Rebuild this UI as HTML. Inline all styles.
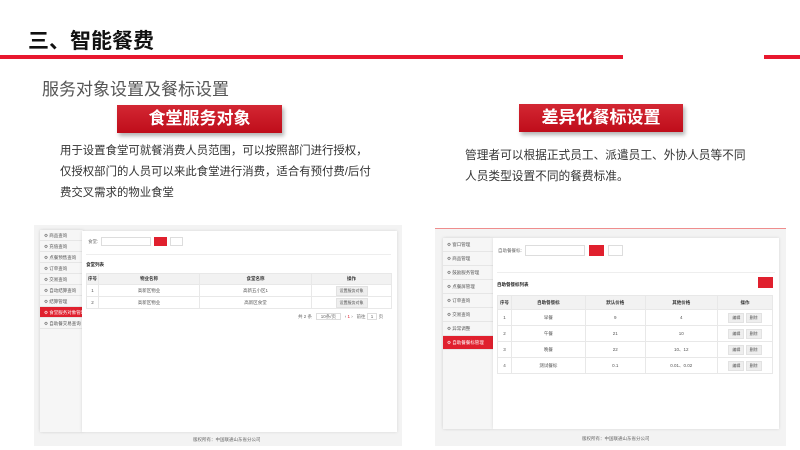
<!DOCTYPE html>
<html><head><meta charset="utf-8"><style>
*{margin:0;padding:0;box-sizing:border-box}
body{width:800px;height:450px;position:relative;background:#fff;font-family:"Liberation Sans","Noto Sans CJK SC",sans-serif;overflow:hidden}
.a{position:absolute}
.t{font-weight:bold;font-size:21px;color:#111;left:28px;top:25px}
.rl{background:#e8182e;height:4px;top:55px}
.sub{left:42px;top:75px;font-size:17px;color:#555}
.box{background:linear-gradient(#d32733,#bf0d1a);color:#fff;font-weight:bold;font-size:17px;text-align:center;line-height:28px;box-shadow:2px 3px 4px rgba(0,0,0,.3)}
.p{font-size:11.4px;color:#333;line-height:21px;white-space:nowrap}
.shot{background:#f3f3f3}
.sb{background:#f6f6f6;box-shadow:0 0 3px rgba(0,0,0,.15)}
.it{font-size:4.5px;color:#555;border-bottom:1px solid #e6e6e6;padding-left:4px;white-space:nowrap}
.it:before{content:"⚙ ";font-size:4.5px;color:#555}
.act{background:#e0202e;color:#fff}
.act:before{color:#fff}
.main{background:#fff;box-shadow:0 0 3px rgba(0,0,0,.12)}
table{border-collapse:collapse;position:absolute;font-size:4.5px;color:#555;text-align:center}
td,th{border:1px solid #e8e8e8;font-weight:normal}
th{background:#f2f2f2;color:#333;font-weight:bold}
.btn{display:inline-block;background:#eee;font-size:4px;padding:1px 3px;border:1px solid #e2e2e2}
.f{font-size:4.5px;color:#666}
</style></head><body>
<div class="a t">三、智能餐费</div>
<div class="a rl" style="left:0;width:623px"></div>
<div class="a rl" style="left:764px;width:36px"></div>
<div class="a sub">服务对象设置及餐标设置</div>
<div class="a box" style="left:117px;top:105px;width:165px;height:28px">食堂服务对象</div>
<div class="a box" style="left:519px;top:104px;width:164px;height:28px">差异化餐标设置</div>
<div class="a p" style="left:60px;top:141px">用于设置食堂可就餐消费人员范围，可以按照部门进行授权，<br>仅授权部门的人员可以来此食堂进行消费，适合有预付费/后付<br>费交叉需求的物业食堂</div>
<div class="a p" style="left:465px;top:145px;font-size:11.7px">管理者可以根据正式员工、派遣员工、外协人员等不同<br>人员类型设置不同的餐费标准。</div>

<!-- left screenshot -->
<div class="a shot" style="left:34px;top:225px;width:368px;height:221px"></div>
<div class="a sb" style="left:40px;top:230px;width:43px;height:202px">
<div class="it" style="height:11px;line-height:11px">商品查询</div>
<div class="it" style="height:11px;line-height:11px">充值查询</div>
<div class="it" style="height:11px;line-height:11px">点餐预售查询</div>
<div class="it" style="height:11px;line-height:11px">订单查询</div>
<div class="it" style="height:11px;line-height:11px">交易查询</div>
<div class="it" style="height:11px;line-height:11px">自动结算查询</div>
<div class="it" style="height:11px;line-height:11px">结算管理</div>
<div class="it act" style="height:11px;line-height:11px">食堂服务对象管理</div>
<div class="it" style="height:11px;line-height:11px">自助餐交易查询</div>
</div>
<div class="a main" style="left:82px;top:231px;width:315px;height:201px">
<div class="a f" style="left:6px;top:8px">食堂:</div>
<div class="a" style="left:19px;top:6px;width:50px;height:9px;border:1px solid #ddd"></div>
<div class="a" style="left:72px;top:6px;width:13px;height:9px;background:#e0202e"></div>
<div class="a" style="left:88px;top:6px;width:13px;height:9px;border:1px solid #ddd"></div>
<div class="a" style="left:4px;top:23px;width:305px;height:1px;background:#eee"></div>
<div class="a f" style="left:4px;top:31px;font-weight:bold;color:#222">食堂列表</div>
<table style="left:4px;top:42px;width:306px">
<tr style="height:11px"><th style="width:12px">序号</th><th>物业名称</th><th>食堂名称</th><th style="width:80px">操作</th></tr>
<tr style="height:12px"><td>1</td><td>高新区物业</td><td>高新五小区1</td><td><span class="btn">设置服务对象</span></td></tr>
<tr style="height:12px"><td>2</td><td>高新区物业</td><td>高新区食堂</td><td><span class="btn">设置服务对象</span></td></tr>
</table>
<div class="a f" style="left:216px;top:83px">共 2 条 &nbsp; <span style="border:1px solid #ddd;padding:0 4px">10条/页</span> &nbsp; ‹ <span style="color:#e0202e">1</span> › &nbsp; 前往 <span style="border:1px solid #ddd;padding:0 3px">1</span> 页</div>
</div>
<div class="a f" style="left:193px;top:437px">版权所有：中国联通山东省分公司</div>

<!-- right screenshot -->
<div class="a shot" style="left:435px;top:228px;width:351px;height:218px"></div>
<div class="a" style="left:435px;top:228px;width:351px;height:1px;background:#ef8d8d"></div>
<div class="a sb" style="left:443px;top:238px;width:50px;height:191px">
<div class="it" style="height:14px;line-height:14px">窗口管理</div>
<div class="it" style="height:14px;line-height:14px">商品管理</div>
<div class="it" style="height:14px;line-height:14px">鼓励服务管理</div>
<div class="it" style="height:14px;line-height:14px">点餐屏管理</div>
<div class="it" style="height:14px;line-height:14px">订单查询</div>
<div class="it" style="height:14px;line-height:14px">交易查询</div>
<div class="it" style="height:14px;line-height:14px">异常调整</div>
<div class="it act" style="height:14px;line-height:14px">自助餐餐标管理</div>
</div>
<div class="a main" style="left:493px;top:238px;width:286px;height:191px">
<div class="a f" style="left:5px;top:10px">自助餐餐标:</div>
<div class="a" style="left:32px;top:7px;width:60px;height:11px;border:1px solid #ddd"></div>
<div class="a" style="left:96px;top:7px;width:15px;height:11px;background:#e0202e"></div>
<div class="a" style="left:115px;top:7px;width:15px;height:11px;border:1px solid #ddd"></div>
<div class="a" style="left:4px;top:34px;width:278px;height:1px;background:#eee"></div>
<div class="a f" style="left:4px;top:44px;font-weight:bold;color:#222">自助餐餐标列表</div>
<div class="a" style="left:265px;top:39px;width:15px;height:11px;background:#e0202e"></div>
<table style="left:4px;top:57px;width:276px">
<tr style="height:14px"><th style="width:14px">序号</th><th>自助餐餐标</th><th>默认价格</th><th>其他价格</th><th style="width:55px">操作</th></tr>
<tr style="height:16px"><td>1</td><td>早餐</td><td>9</td><td>4</td><td><span class="btn">编辑</span> <span class="btn">删除</span></td></tr>
<tr style="height:16px"><td>2</td><td>午餐</td><td>21</td><td>10</td><td><span class="btn">编辑</span> <span class="btn">删除</span></td></tr>
<tr style="height:16px"><td>3</td><td>晚餐</td><td>22</td><td>10、12</td><td><span class="btn">编辑</span> <span class="btn">删除</span></td></tr>
<tr style="height:16px"><td>4</td><td>测试餐标</td><td>0.1</td><td>0.01、0.02</td><td><span class="btn">编辑</span> <span class="btn">删除</span></td></tr>
</table>
</div>
<div class="a f" style="left:582px;top:436px">版权所有：中国联通山东省分公司</div>
</body></html>
